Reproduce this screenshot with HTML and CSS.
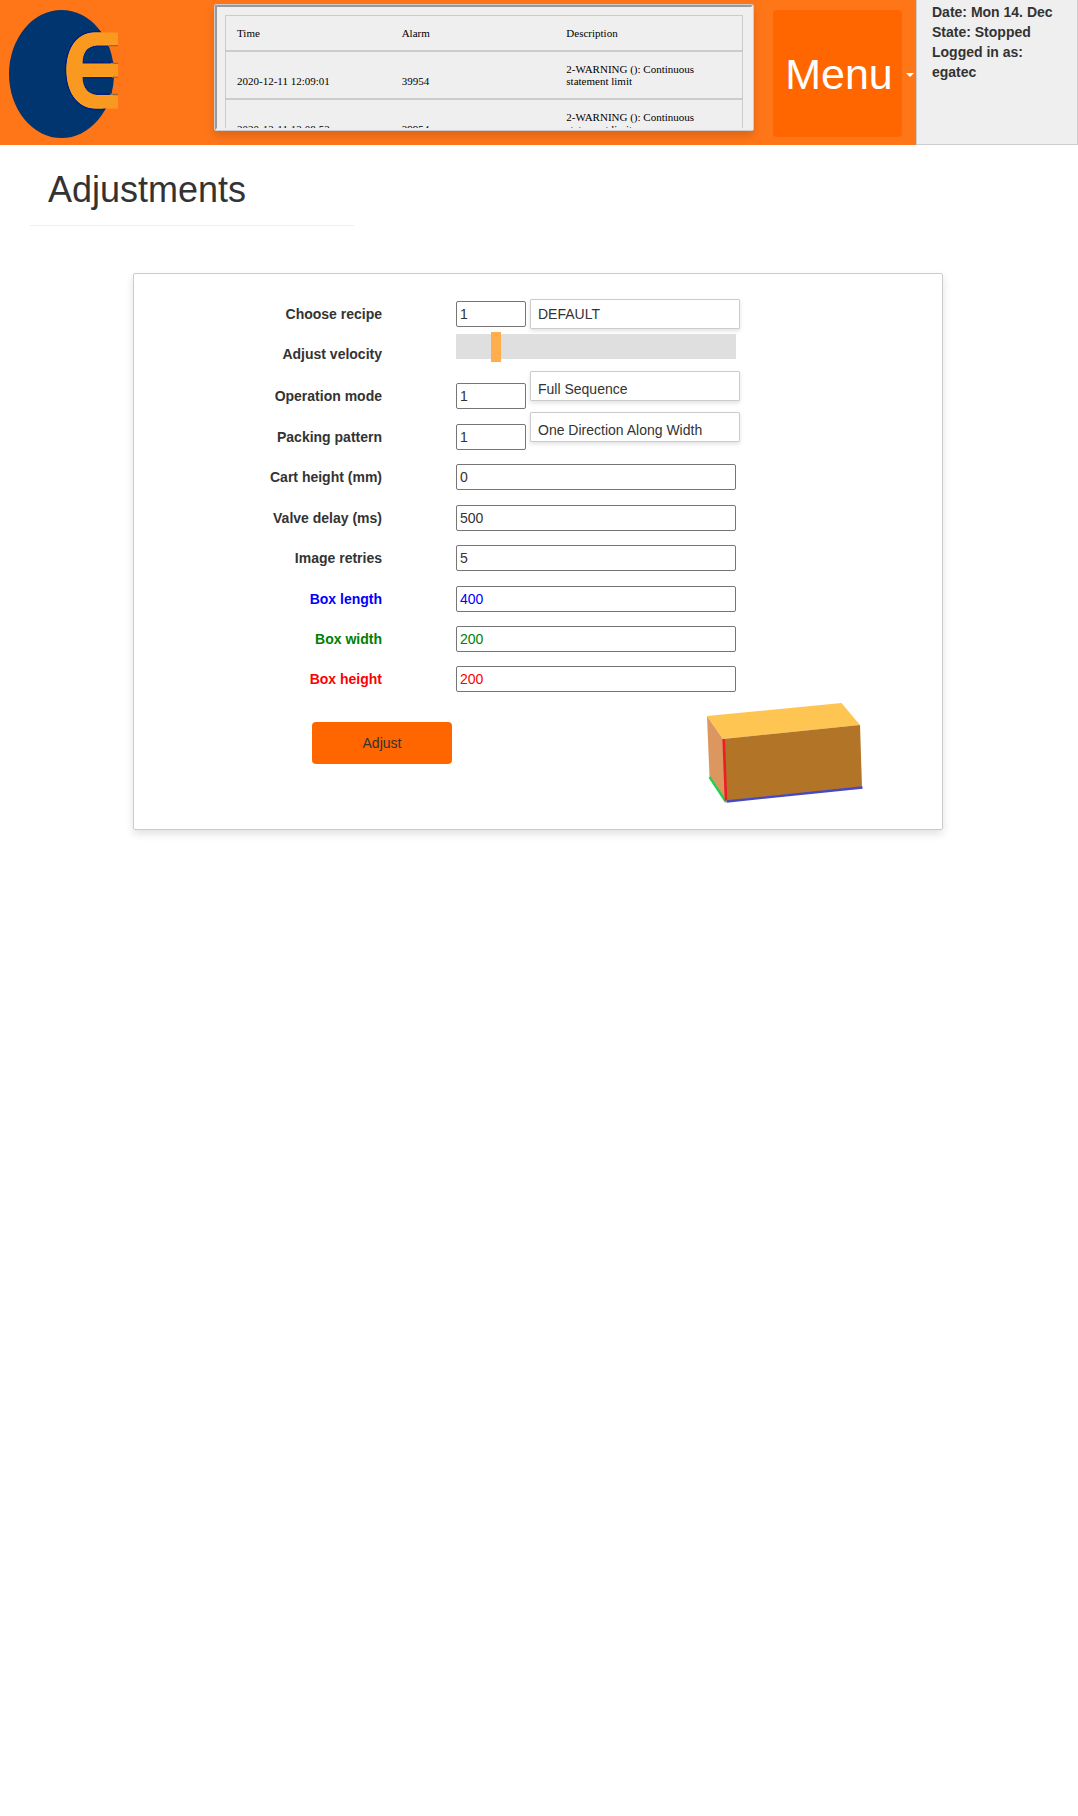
FILE: index.html
```html
<!DOCTYPE html>
<html lang="en">
<head>
<meta charset="utf-8">
<title>Adjustments</title>
<link rel="stylesheet" href="styles.css">
</head>
<body>
<header class="topbar">
  <svg class="logo" width="110" height="130" viewBox="9 9 110 130" aria-label="Logo">
    <defs><clipPath id="disc"><ellipse cx="61.5" cy="74" rx="52.5" ry="64"/></clipPath></defs>
    <ellipse cx="61.5" cy="74" rx="52.5" ry="64" fill="#003570"/>
    <path clip-path="url(#disc)" d="M118 32H95C76 32 66 50 66 70S76 109 96 109H118V95H97C88 94 82 88 82 77H118V63H82C82 52 87 46 97 45.500H118Z" fill="none" stroke="#001f85" stroke-width="2.500"/>
    <path d="M118 45.500H108M118 63.500H111M118 77H112M118 94.500H110" stroke="#8a6c4c" stroke-width="1.500"/>
    <path d="M118 32.500H95C76 32.500 66.500 50 66.500 70S76 108.500 96 108.500H118V95.500H97C88 94.500 82 88 82 76.500H118V64H82C82 52 87 46 97 45H118Z" fill="#f9991f"/>
    <path d="M102 33H95C76 33 67 50 67 70S76 108 96 108H103M113 95.500H97C88 94.500 82 88 82 76.500H113M113 64H82C82 52 87 46 97 45H109" fill="none" stroke="#ffa312" stroke-width="1"/>
  </svg>
  <section class="alarms">
    <div class="alarm-view">
      <div class="alarm-row"><span>Time</span><span>Alarm</span><span>Description</span></div>
      <div class="alarm-row"><span>2020-12-11 12:09:01</span><span>39954</span><span>2-WARNING (): Continuous statement limit</span></div>
      <div class="alarm-row"><span>2020-12-11 12:08:52</span><span>39954</span><span>2-WARNING (): Continuous statement limit</span></div>
    </div>
  </section>
  <nav class="menu"><a class="menu-button">Menu</a><i class="caret"></i></nav>
  <aside class="status">Date: Mon 14. Dec<br>State: Stopped<br>Logged in as:<br>egatec</aside>
</header>
<h1 class="title">Adjustments</h1>
<main class="card">
  <form class="fields">
    <label>Choose recipe</label>
    <div class="control"><input class="short" value="1"><output class="name">DEFAULT</output></div>
    <label>Adjust velocity</label>
    <div class="control"><div class="slider"><div class="thumb"></div></div></div>
    <label>Operation mode</label>
    <div class="control"><input class="short" value="1"><output class="name raised">Full Sequence</output></div>
    <label>Packing pattern</label>
    <div class="control"><input class="short" value="1"><output class="name raised">One Direction Along Width</output></div>
    <label>Cart height (mm)</label>
    <div class="control"><input value="0"></div>
    <label>Valve delay (ms)</label>
    <div class="control"><input value="500"></div>
    <label>Image retries</label>
    <div class="control"><input value="5"></div>
    <label class="length">Box length</label>
    <div class="control"><input class="length" value="400"></div>
    <label class="width">Box width</label>
    <div class="control"><input class="width" value="200"></div>
    <label class="height">Box height</label>
    <div class="control"><input class="height" value="200"></div>
  </form>
  <div class="actions">
    <button class="adjust">Adjust</button>
    <svg class="box" width="160" height="104" viewBox="705 701 160 104">
      <path d="M707 716L723 739L726 802L709.500 777Z" fill="#dc965f"/>
      <path d="M707 716L841.500 703L860 725L723 739Z" fill="#ffc552"/>
      <path d="M723 739L860 725L862 787.500L726 801Z" fill="#b27527"/>
      <path d="M726.500 801.500L862.500 787.500" stroke="#4648c4" stroke-width="2.300"/>
      <path d="M709.500 777L726 802" stroke="#22cf50" stroke-width="2.300"/>
      <path d="M723.700 739L726 800.500" stroke="#ee1c25" stroke-width="2.600"/>
    </svg>
  </div>
</main>
</body>
</html>
```
FILE: styles.css
```css
* { box-sizing: border-box; }
body {
  min-height: 1816px;
  margin: 0;
  background: #fff;
  color: #333;
  font: 14px/20px "Liberation Sans", Arial, sans-serif;
}
.topbar {
  display: flex;
  height: 145px;
  background: #ff7619;
}
.logo { flex: none; margin: 9px 95px 0 9px; }
.alarms {
  flex: none;
  width: 540px;
  height: 127px;
  margin-top: 4px;
  border: 1px solid #ccc;
  border-radius: 2px;
  box-shadow: 0 5px 10px rgba(0, 0, 0, .14);
}
.alarm-view {
  height: 125px;
  padding: 8px;
  overflow: hidden;
  background: #efefef;
  border: 2px solid;
  border-color: #9a9a9a #eee #eee #9a9a9a;
  color: #000;
  font: 11px/12px "Liberation Serif", "Times New Roman", serif;
}
.alarm-row {
  display: grid;
  grid-template-columns: repeat(3, 1fr);
  align-items: end;
  padding: 11px;
  border: 1px solid #ccc;
}
.alarm-row span { padding-right: 10px; }
.menu {
  display: flex;
  flex: none;
  align-items: center;
  width: 162px;
  height: 147px;
  padding-left: 19px;
}
.menu-button {
  width: 129px;
  height: 127px;
  padding: 1px 0 0 3px;
  background: #f60;
  border-radius: 4px;
  color: #fff;
  font-size: 43px;
  line-height: 127px;
  text-align: center;
}
.caret {
  margin: 3px 0 0 4px;
  border: 4px solid transparent;
  border-top-color: #fff;
  border-bottom: 0;
}
.status {
  flex: 1;
  padding: 2px 15px;
  background: #efefef;
  border: 1px solid #ccc;
  border-top: 0;
  font-weight: bold;
}
.title {
  width: 324px;
  height: 56px;
  margin: 25px 0 0 30px;
  padding: 0 18px;
  border-bottom: 1px solid #eee;
  font-size: 36px;
  font-weight: normal;
  line-height: 40px;
}
.card {
  width: 810px;
  height: 557px;
  margin: 47px 0 0 133px;
  padding-top: 27px;
  border: 1px solid #ccc;
  border-radius: 2px;
  box-shadow: 0 4px 8px rgba(0, 0, 0, .12);
}
.fields {
  display: grid;
  grid-template-columns: 248px 284px;
  grid-template-rows: 40px 42px 41px 40px 41px 40px 41px 40px 40px 26px;
  column-gap: 74px;
}
.fields label {
  height: 26px;
  font-weight: bold;
  line-height: 26px;
  text-align: right;
}
.control { display: flex; align-items: flex-start; height: 26px; }
.control input {
  width: 280px;
  height: 26px;
  padding: 1px 3px;
  background: #fff;
  border: 1px solid #767676;
  border-radius: 2px;
  color: #333;
  font: 14px/20px "Liberation Sans", Arial, sans-serif;
}
.control .short { width: 70px; margin-right: 4px; }
.name {
  width: 210px;
  height: 30px;
  margin-top: -2px;
  padding: 4px 7px;
  border: 1px solid #ccc;
  border-radius: 1px;
  box-shadow: 0 2px 4px rgba(0, 0, 0, .12);
}
.raised { margin-top: -12px; padding-top: 7px; }
.slider {
  width: 280px;
  height: 25px;
  margin-top: -7px;
  padding-left: 35px;
  background: #dfdfdf;
}
.thumb { position: relative; top: -2px; width: 10px; height: 30px; background: #ffad4d; }
.fields .length { color: blue; }
.fields .width { color: green; }
.fields .height { color: red; }
.actions { display: flex; align-items: flex-start; padding: 9px 0 0 178px; }
.adjust {
  width: 140px;
  height: 42px;
  margin: 21px 253px 0 0;
  padding: 0;
  background: #f60;
  border: 0;
  border-radius: 4px;
  color: #333;
  font: 14px/20px "Liberation Sans", Arial, sans-serif;
}
```
